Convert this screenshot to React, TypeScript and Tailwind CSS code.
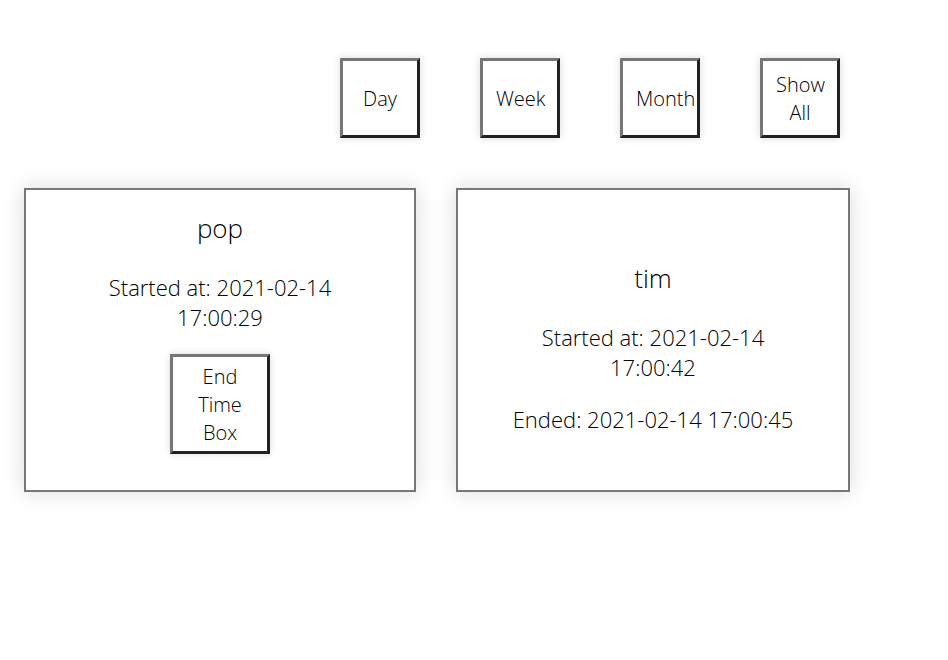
import React from "react"

const filters = ["Day", "Week", "Month", "Show All"]

const bevel =
  "border-[3px] border-t-[#767676] border-l-[#767676] border-b-[#222] border-r-[#222] bg-white shadow-[0_0_8px_rgba(0,0,0,0.15)]"

export default function App() {
  return (
    <div className="min-h-[660px] bg-white font-light text-black" style={{ fontFamily: '"Open Sans", "Liberation Sans", sans-serif' }}>
      <div className="flex gap-[60px] pl-[340px] pt-[58px]">
        {filters.map((f) => (
          <button key={f} className={`h-[80px] w-[80px] px-[13px] pt-[2px] text-center text-[20px] leading-[28px] ${bevel}`}>
            {f}
          </button>
        ))}
      </div>

      <div className="mt-[50px] flex gap-[40px] pl-[24px]">
        {/* running box */}
        <div className="flex h-[304px] w-[392px] flex-col items-center border-2 border-[#777] pt-[19px] shadow-[0_0_20px_rgba(0,0,0,0.15)]">
          <h2 className="text-[26px] leading-[38px]">pop</h2>
          <p className="mt-[25px] text-center text-[22px] leading-[30px]">
            Started at: 2021-02-14
            <br />
            17:00:29
          </p>
          <button className={`mt-[22px] h-[100px] w-[100px] px-[13px] pt-[2px] text-center text-[20px] leading-[28px] ${bevel}`}>
            End Time Box
          </button>
        </div>

        {/* finished box */}
        <div className="flex h-[304px] w-[394px] flex-col items-center border-2 border-[#777] pt-[69px] shadow-[0_0_20px_rgba(0,0,0,0.15)]">
          <h2 className="text-[26px] leading-[38px]">tim</h2>
          <p className="mt-[25px] text-center text-[22px] leading-[30px]">
            Started at: 2021-02-14
            <br />
            17:00:42
          </p>
          <p className="mt-[22px] text-[22px] leading-[30px]">Ended: 2021-02-14 17:00:45</p>
        </div>
      </div>
    </div>
  )
}
